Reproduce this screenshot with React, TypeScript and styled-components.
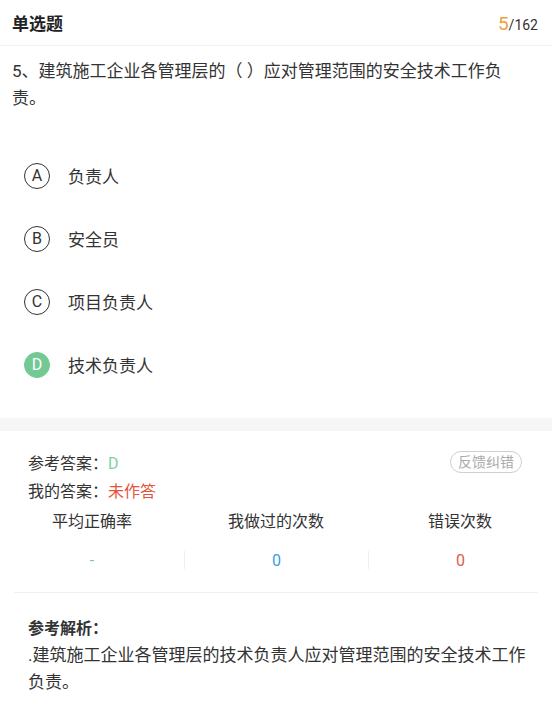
import styled, { createGlobalStyle } from 'styled-components'

const GlobalStyle = createGlobalStyle`
  html, body {
    margin: 0;
    padding: 0;
    background: #ffffff;
  }
  body {
    font-family: Roboto, "Noto Sans CJK SC", sans-serif;
    color: #333333;
  }
`

const options = [
  { key: 'A', text: '负责人' },
  { key: 'B', text: '安全员' },
  { key: 'C', text: '项目负责人' },
  { key: 'D', text: '技术负责人' },
]

const correct = 'D'

const stats = [
  { label: '平均正确率', value: '-', color: '#86bdb3' },
  { label: '我做过的次数', value: '0', color: '#3a9edc' },
  { label: '错误次数', value: '0', color: '#de5a4a' },
]

export default function App() {
  return (
    <Page>
      <GlobalStyle />
      <Header>
        <Title>单选题</Title>
        <Progress>
          <Current>5</Current>/162
        </Progress>
      </Header>

      <Question>5、建筑施工企业各管理层的（ ）应对管理范围的安全技术工作负责。</Question>

      <OptionList>
        {options.map((o) => (
          <OptionRow key={o.key}>
            <Letter $active={o.key === correct}>{o.key}</Letter>
            <OptionText>{o.text}</OptionText>
          </OptionRow>
        ))}
      </OptionList>

      <Band />

      <AnswerBlock>
        <AnswerRow>
          <span>
            参考答案：<Correct>D</Correct>
          </span>
          <Feedback>反馈纠错</Feedback>
        </AnswerRow>
        <AnswerRow>
          <span>
            我的答案：<Missing>未作答</Missing>
          </span>
        </AnswerRow>
      </AnswerBlock>

      <Stats>
        {stats.map((s) => (
          <StatLabel key={s.label}>{s.label}</StatLabel>
        ))}
        {stats.map((s, i) => (
          <StatValue key={s.label + 'v'} $first={i === 0} $color={s.color}>
            {s.value}
          </StatValue>
        ))}
      </Stats>

      <Divider />

      <Analysis>
        <AnalysisTitle>参考解析：</AnalysisTitle>
        <AnalysisText>.建筑施工企业各管理层的技术负责人应对管理范围的安全技术工作负责。</AnalysisText>
      </Analysis>
    </Page>
  )
}

const Page = styled.div`
  width: 552px;
  min-height: 728px;
  background: #ffffff;
`

const Header = styled.header`
  display: flex;
  justify-content: space-between;
  align-items: center;
  height: 45px;
  padding: 0 14px 0 12px;
  border-bottom: 1px solid #f2f2f2;
`

const Title = styled.div`
  font-size: 17px;
  font-weight: 700;
  color: #222222;
`

const Progress = styled.div`
  font-size: 14px;
  color: #333333;
  padding-top: 2px;
`

const Current = styled.span`
  font-size: 19px;
  color: #eea03f;
`

const Question = styled.div`
  padding: 12px 40px 0 12px;
  font-size: 17px;
  line-height: 27px;
  color: #333333;
`

const OptionList = styled.div`
  display: flex;
  flex-direction: column;
  padding: 32px 0 22px 0;
`

const OptionRow = styled.div`
  display: flex;
  align-items: center;
  gap: 18px;
  height: 63px;
  padding-left: 24px;
`

const Letter = styled.div<{ $active: boolean }>`
  display: flex;
  align-items: center;
  justify-content: center;
  box-sizing: border-box;
  width: 26px;
  height: 26px;
  border-radius: 50%;
  font-size: 16px;
  border: 1px solid ${(p) => (p.$active ? '#72c994' : '#333333')};
  background: ${(p) => (p.$active ? '#72c994' : 'transparent')};
  color: ${(p) => (p.$active ? '#ffffff' : '#333333')};
`

const OptionText = styled.div`
  font-size: 17px;
  color: #333333;
`

const Band = styled.div`
  height: 13px;
  background: #f6f6f6;
`

const AnswerBlock = styled.div`
  display: flex;
  flex-direction: column;
  padding: 17px 30px 5px 28px;
`

const AnswerRow = styled.div`
  display: flex;
  justify-content: space-between;
  align-items: center;
  height: 28px;
  font-size: 16px;
  color: #333333;
`

const Correct = styled.span`
  color: #7fd09e;
`

const Missing = styled.span`
  color: #e5533d;
`

const Feedback = styled.div`
  box-sizing: border-box;
  height: 22px;
  padding: 0 7px;
  border: 1px solid #d0d0d0;
  border-radius: 11px;
  font-size: 14px;
  line-height: 20px;
  color: #aaaaaa;
`

const Stats = styled.div`
  display: grid;
  grid-template-columns: repeat(3, 1fr);
  row-gap: 17px;
  padding-top: 1px;
`

const StatLabel = styled.div`
  text-align: center;
  font-size: 16px;
  line-height: 24px;
  color: #333333;
`

const StatValue = styled.div<{ $first: boolean; $color: string }>`
  display: flex;
  align-items: center;
  justify-content: center;
  height: 18px;
  font-size: 16px;
  color: ${(p) => p.$color};
  border-left: ${(p) => (p.$first ? 'none' : '1px solid #eeeeee')};
`

const Divider = styled.div`
  margin: 23px 14px 0 14px;
  border-top: 1px solid #f0f0f0;
`

const Analysis = styled.div`
  padding: 22px 24px 20px 28px;
`

const AnalysisTitle = styled.div`
  font-size: 16px;
  font-weight: 700;
  line-height: 27px;
  color: #333333;
`

const AnalysisText = styled.div`
  font-size: 17px;
  line-height: 27px;
  color: #333333;
`
